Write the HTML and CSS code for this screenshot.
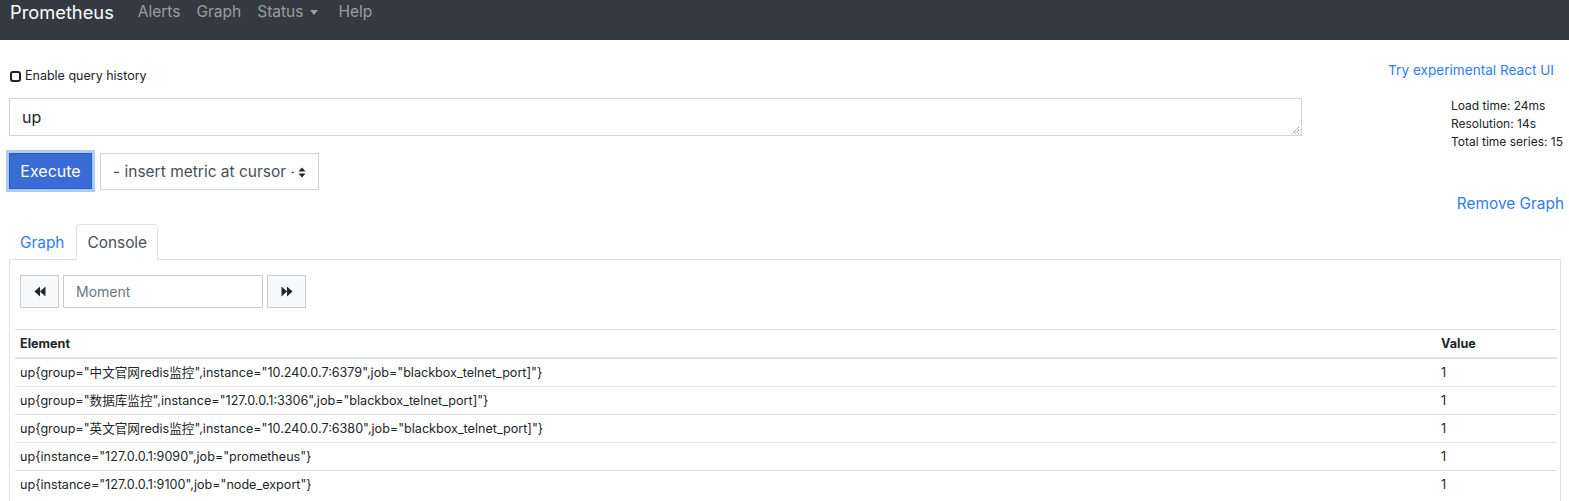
FILE: index.html
```html
<!DOCTYPE html>
<html>
<head>
<meta charset="utf-8">
<title>Prometheus Time Series Collection and Processing Server</title>
<link rel="stylesheet" href="styles.css">
</head>
<body>
<nav class="navbar">
  <span class="brand">Prometheus</span>
  <span class="nav-link">Alerts</span>
  <span class="nav-link">Graph</span>
  <span class="nav-link">Status <span class="caret"></span></span>
  <span class="nav-link">Help</span>
</nav>
<div class="page">
  <div class="top-row">
    <label class="history"><span class="checkbox"></span>Enable query history</label>
    <a class="react-link">Try experimental React UI</a>
  </div>
  <div class="expr-row">
    <div class="expr-left">
      <div class="textarea">up<span class="grip"><svg width="9" height="9" viewBox="0 0 9 9"><path d="M8 1 L1 8 M8 4 L4 8 M8 7 L7 8" stroke="#555" stroke-width="1" stroke-dasharray="1 1" fill="none"/></svg></span></div>
      <div class="exec-row">
        <button class="btn-exec">Execute</button>
        <div class="select"><span class="select-text">- insert metric at cursor -</span><span class="updown"><svg width="8" height="11" viewBox="0 0 8 11"><path d="M0.5 4.5 L4 0.5 L7.5 4.5 Z M0.5 6.5 L4 10.5 L7.5 6.5 Z" fill="#212529"/></svg></span></div>
      </div>
    </div>
    <div class="expr-right">
      <div class="stats">
        <div>Load time: 24ms</div>
        <div>Resolution: 14s</div>
        <div>Total time series: 15</div>
      </div>
    </div>
  </div>
  <div class="remove-row"><a class="remove">Remove Graph</a></div>
  <div class="tabs">
    <a class="tab">Graph</a>
    <a class="tab active">Console</a>
  </div>
  <div class="panel">
    <div class="moment-row">
      <button class="btn-nav"><svg width="12" height="11" viewBox="0 0 12 11"><path d="M6 0.5 L0.5 5.5 L6 10.5 Z M11.5 0.5 L6 5.5 L11.5 10.5 Z" fill="#212529"/></svg></button>
      <div class="moment">Moment</div>
      <button class="btn-nav"><svg width="12" height="11" viewBox="0 0 12 11"><path d="M0.5 0.5 L6 5.5 L0.5 10.5 Z M6 0.5 L11.5 5.5 L6 10.5 Z" fill="#212529"/></svg></button>
    </div>
    <table class="data">
      <thead>
        <tr><th class="col-el">Element</th><th>Value</th></tr>
      </thead>
      <tbody>
        <tr><td>up{group="中文官网redis监控",instance="10.240.0.7:6379",job="blackbox_telnet_port]"}</td><td>1</td></tr>
        <tr><td>up{group="数据库监控",instance="127.0.0.1:3306",job="blackbox_telnet_port]"}</td><td>1</td></tr>
        <tr><td>up{group="英文官网redis监控",instance="10.240.0.7:6380",job="blackbox_telnet_port]"}</td><td>1</td></tr>
        <tr><td>up{instance="127.0.0.1:9090",job="prometheus"}</td><td>1</td></tr>
        <tr><td>up{instance="127.0.0.1:9100",job="node_export"}</td><td>1</td></tr>
      </tbody>
    </table>
  </div>
</div>
</body>
</html>
```
FILE: styles.css
```css
html, body {
  margin: 0;
  padding: 0;
  background: #fff;
  font-family: Inter, "Noto Sans CJK SC", sans-serif;
  color: #212529;
  overflow: hidden;
}
.navbar {
  height: 40px;
  background: #343a40;
  display: flex;
  align-items: flex-start;
  padding-left: 10px;
  box-sizing: border-box;
}
.brand {
  color: #fff;
  font-size: 18.3px;
  line-height: 24px;
  margin-right: 24px;
}
.nav-link {
  color: rgba(255,255,255,.5);
  font-size: 15.5px;
  line-height: 24px;
  margin-right: 16px;
  display: flex;
  align-items: center;
}
.caret {
  display: inline-block;
  width: 0;
  height: 0;
  border-left: 4.5px solid transparent;
  border-right: 4.5px solid transparent;
  border-top: 5px solid rgba(255,255,255,.5);
  margin-left: 7px;
  margin-right: 4px;
}
.page {
  padding: 0 6px 0 9px;
}
.top-row {
  display: flex;
  justify-content: space-between;
  align-items: flex-start;
  height: 58px;
  padding-top: 20px;
  box-sizing: border-box;
}
.history {
  display: flex;
  align-items: center;
  font-size: 12.5px;
  line-height: 16px;
  margin-top: 8px;
  margin-left: 1px;
}
.checkbox {
  width: 7px;
  height: 7px;
  border: 2px solid #222;
  border-radius: 3px;
  margin-right: 4px;
}
.react-link {
  color: #2f7df6;
  font-size: 13.6px;
  line-height: 20px;
  margin-right: 9px;
}
.expr-row {
  display: flex;
}
.expr-left {
  width: 1293px;
}
.expr-right {
  flex: 1;
  padding-left: 149px;
}
.stats {
  font-size: 12px;
  line-height: 18px;
  margin-top: -1px;
  white-space: nowrap;
}
.textarea {
  position: relative;
  height: 36px;
  border: 1px solid #ced4da;
  font-size: 16px;
  line-height: 36px;
  padding-left: 12px;
  color: #212529;
}
.grip {
  position: absolute;
  right: 1px;
  bottom: 0px;
  line-height: 0;
}
.exec-row {
  display: flex;
  margin-top: 17px;
  gap: 8px;
}
.btn-exec {
  width: 83px;
  height: 36px;
  background: #3a6bd6;
  border: 1px solid #2c5bbd;
  color: #fff;
  font-family: inherit;
  font-size: 16px;
  box-shadow: 0 0 0 3px #a8cdf8;
  padding: 0;
}
.select {
  width: 205px;
  height: 35px;
  border: 1px solid #ced4da;
  font-size: 15.5px;
  line-height: 35px;
  padding-left: 12px;
  color: #495057;
  display: flex;
  align-items: center;
  white-space: nowrap;
  position: relative;
}
.select-text {
  width: 181px;
  overflow: hidden;
}
.updown {
  position: absolute;
  right: 12px;
  top: 13px;
  line-height: 0;
}
.remove-row {
  display: flex;
  justify-content: flex-end;
  margin-top: 2px;
}
.remove {
  color: #2f7df6;
  font-size: 15.4px;
  line-height: 24px;
  margin-right: -1px;
}
.tabs {
  display: flex;
  margin-top: 8px;
  padding-left: 0px;
  height: 36px;
}
.tab {
  font-size: 15.4px;
  line-height: 35px;
  padding: 0 10px;
  color: #2f7df6;
  border: 1px solid transparent;
  border-radius: 4px 4px 0 0;
}
.tab.active {
  color: #495057;
  border-color: #dee2e6 #dee2e6 #fff;
  background: #fff;
  position: relative;
  z-index: 1;
  margin-left: 1px;
}
.panel {
  border: 1px solid #dee2e6;
  margin-top: -1px;
  width: 1552px;
  height: 260px;
  padding: 15px 5px 0 5px;
  box-sizing: border-box;
}
.moment-row {
  display: flex;
  gap: 4px;
  margin-left: 5px;
}
.btn-nav {
  width: 39px;
  height: 33px;
  background: #f8f9fa;
  border: 1px solid #ccc;
  padding: 0;
  display: flex;
  align-items: center;
  justify-content: center;
}
.moment {
  width: 186px;
  height: 31px;
  border: 1px solid #ccc;
  font-size: 14px;
  line-height: 31px;
  padding-left: 12px;
  color: #6c757d;
}
.data {
  margin-top: 21px;
  width: 1542px;
  border-collapse: collapse;
  font-size: 12.6px;
}
.data th, .data td {
  text-align: left;
  padding: 4.5px 5px;
  line-height: 18px;
  border-top: 1px solid #dee2e6;
  vertical-align: top;
}
.data th {
  font-weight: bold;
  border-bottom: 2px solid #dee2e6;
}
.col-el {
  width: 1411px;
}
```
